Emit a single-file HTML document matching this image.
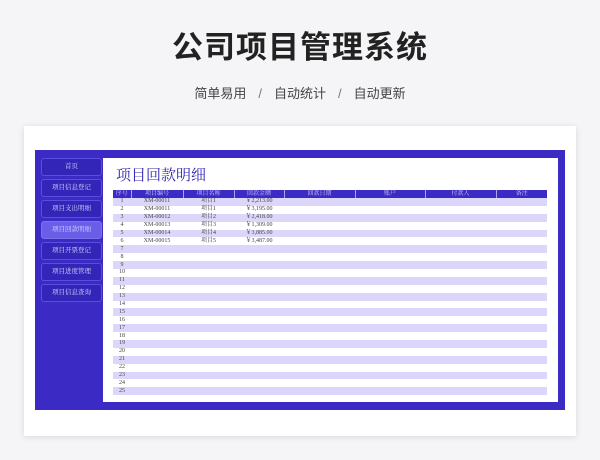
<!DOCTYPE html>
<html><head><meta charset="utf-8"><style>
*{margin:0;padding:0;box-sizing:border-box}
body{width:600px;height:460px;background:#f5f5f7;font-family:"Liberation Sans","Noto Sans CJK SC",sans-serif;position:relative;overflow:hidden}
h1{position:absolute;top:22px;left:0;width:600px;text-align:center;font-size:31px;font-weight:bold;color:#222;letter-spacing:1px}
.sub{position:absolute;top:83px;left:0;width:600px;text-align:center;font-size:13px;color:#444;word-spacing:0}
.sub span{margin:0 12px;color:#777}
.card{position:absolute;left:24px;top:126px;width:552px;height:310px;background:#fff;box-shadow:0 1px 6px rgba(0,0,0,.12)}
.panel{position:absolute;left:35px;top:150px;width:530px;height:260px;background:#3b2bc4}
.inner{position:absolute;left:103px;top:158px;width:455px;height:244px;background:#fff}
.btn{position:absolute;left:41px;width:61px;height:18px;border:1px solid #5a4de0;border-radius:3px;background:#3325b8;color:#dcd8ff;font-family:"Liberation Serif","Noto Serif CJK SC",serif;font-size:6.5px;text-align:center;line-height:16px}
.btn.act{background:#6a5ee8;border-color:#7b70ee}
.title{position:absolute;left:116px;top:164px;font-family:"Liberation Serif","Noto Serif CJK SC",serif;font-size:15px;color:#3325b0}
table{position:absolute;left:113px;top:190px;width:434px;border-collapse:collapse;font-family:"Liberation Serif","Noto Serif CJK SC",serif;font-size:6px;color:#444}
td,th{height:7.9px;line-height:7px;padding:0;text-align:center;white-space:nowrap}
th{background:#3b2bc4;color:#cfcaff;font-weight:normal;border-left:1px solid #a9a2f0;height:8px}
th:first-child{border-left:none}
tr:nth-child(even) td{background:#dcd7fa}
</style></head><body>
<h1>公司项目管理系统</h1>
<div class="sub">简单易用<span>/</span>自动统计<span>/</span>自动更新</div>
<div class="card"></div>
<div class="panel"></div>
<div class="inner"></div>
<div class="btn" style="top:158px">首页</div>
<div class="btn" style="top:179px">项目信息登记</div>
<div class="btn" style="top:200px">项目支出明细</div>
<div class="btn act" style="top:221px">项目回款明细</div>
<div class="btn" style="top:242px">项目开票登记</div>
<div class="btn" style="top:263px">项目进度管理</div>
<div class="btn" style="top:284px">项目信息查询</div>
<div class="title">项目回款明细</div>
<table>
<colgroup><col style="width:18px"><col style="width:52px"><col style="width:51px"><col style="width:50px"><col style="width:71px"><col style="width:70px"><col style="width:71px"><col style="width:51px"></colgroup>
<tr><th>序号</th><th>项目编号</th><th>项目名称</th><th>回款金额</th><th>回款日期</th><th>账户</th><th>付款人</th><th>备注</th></tr>
<tr><td>1</td><td>XM-00011</td><td>项目1</td><td>￥2,213.00</td><td></td><td></td><td></td><td></td></tr>
<tr><td>2</td><td>XM-00011</td><td>项目1</td><td>￥3,195.00</td><td></td><td></td><td></td><td></td></tr>
<tr><td>3</td><td>XM-00012</td><td>项目2</td><td>￥2,418.00</td><td></td><td></td><td></td><td></td></tr>
<tr><td>4</td><td>XM-00013</td><td>项目3</td><td>￥1,309.00</td><td></td><td></td><td></td><td></td></tr>
<tr><td>5</td><td>XM-00014</td><td>项目4</td><td>￥3,885.00</td><td></td><td></td><td></td><td></td></tr>
<tr><td>6</td><td>XM-00015</td><td>项目5</td><td>￥3,487.00</td><td></td><td></td><td></td><td></td></tr>
<tr><td>7</td><td></td><td></td><td></td><td></td><td></td><td></td><td></td></tr>
<tr><td>8</td><td></td><td></td><td></td><td></td><td></td><td></td><td></td></tr>
<tr><td>9</td><td></td><td></td><td></td><td></td><td></td><td></td><td></td></tr>
<tr><td>10</td><td></td><td></td><td></td><td></td><td></td><td></td><td></td></tr>
<tr><td>11</td><td></td><td></td><td></td><td></td><td></td><td></td><td></td></tr>
<tr><td>12</td><td></td><td></td><td></td><td></td><td></td><td></td><td></td></tr>
<tr><td>13</td><td></td><td></td><td></td><td></td><td></td><td></td><td></td></tr>
<tr><td>14</td><td></td><td></td><td></td><td></td><td></td><td></td><td></td></tr>
<tr><td>15</td><td></td><td></td><td></td><td></td><td></td><td></td><td></td></tr>
<tr><td>16</td><td></td><td></td><td></td><td></td><td></td><td></td><td></td></tr>
<tr><td>17</td><td></td><td></td><td></td><td></td><td></td><td></td><td></td></tr>
<tr><td>18</td><td></td><td></td><td></td><td></td><td></td><td></td><td></td></tr>
<tr><td>19</td><td></td><td></td><td></td><td></td><td></td><td></td><td></td></tr>
<tr><td>20</td><td></td><td></td><td></td><td></td><td></td><td></td><td></td></tr>
<tr><td>21</td><td></td><td></td><td></td><td></td><td></td><td></td><td></td></tr>
<tr><td>22</td><td></td><td></td><td></td><td></td><td></td><td></td><td></td></tr>
<tr><td>23</td><td></td><td></td><td></td><td></td><td></td><td></td><td></td></tr>
<tr><td>24</td><td></td><td></td><td></td><td></td><td></td><td></td><td></td></tr>
<tr><td>25</td><td></td><td></td><td></td><td></td><td></td><td></td><td></td></tr>
</table>
</body></html>
